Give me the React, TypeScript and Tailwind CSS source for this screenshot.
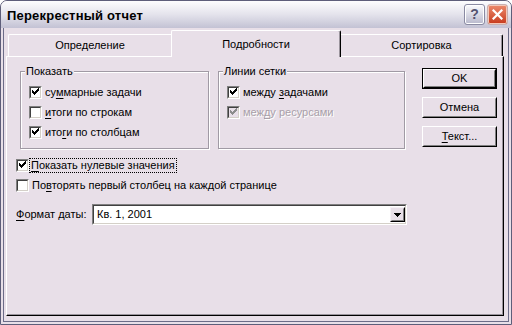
import React from 'react';

const BG = 'bg-[#e8dfe8]';

const Mark: React.FC<{ color: string }> = ({ color }) => (
  <svg width="9" height="9" viewBox="0 0 9 9" shapeRendering="crispEdges">
    {[
      [1, 2],
      [2, 3],
      [3, 4],
      [4, 3],
      [5, 2],
      [6, 1],
      [7, 0],
    ].map(([x, y]) => (
      <rect key={x} x={x} y={y} width="1" height="3" fill={color} />
    ))}
  </svg>
);

const CheckBox: React.FC<{ checked?: boolean; disabled?: boolean }> = ({ checked, disabled }) => (
  <div className="w-[13px] h-[13px] shrink-0 flex border border-t-[#808080] border-l-[#808080] border-r-white border-b-white">
    <div
      className={`flex-1 flex items-center justify-center border border-t-[#404040] border-l-[#404040] border-r-[#d4d0c8] border-b-[#d4d0c8] ${
        disabled ? BG : 'bg-white'
      }`}
    >
      {checked && <Mark color={disabled ? '#8c8c8c' : '#000'} />}
    </div>
  </div>
);

const U: React.FC<{ children: React.ReactNode }> = ({ children }) => (
  <span className="underline underline-offset-[2px]">{children}</span>
);

const Row: React.FC<{ checked?: boolean; disabled?: boolean; children: React.ReactNode }> = ({
  checked,
  disabled,
  children,
}) => (
  <div className="flex items-center h-[20px] gap-[3px] whitespace-nowrap">
    <CheckBox checked={checked} disabled={disabled} />
    <span className={disabled ? 'text-[#a8a0a8] [text-shadow:1px_1px_0_#fff]' : ''}>{children}</span>
  </div>
);

const Button: React.FC<{ isDefault?: boolean; children: React.ReactNode }> = ({ isDefault, children }) => (
  <div className={`w-[75px] h-[21px] flex ${isDefault ? 'border border-black' : ''}`}>
    <div className="flex-1 flex border border-t-white border-l-white border-r-black border-b-black">
      <div className="flex-1 flex items-center justify-center border border-t-transparent border-l-transparent border-r-[#808080] border-b-[#808080]">
        {children}
      </div>
    </div>
  </div>
);

const GroupBox: React.FC<{ title: string; width: string; children: React.ReactNode }> = ({
  title,
  width,
  children,
}) => (
  <fieldset
    className={`${width} m-0 p-0 border border-[#a09aa4] shadow-[inset_1px_1px_0_#fff,1px_1px_0_#fff]`}
  >
    <legend className={`ml-[4px] px-[1px] leading-[14px] ${BG}`}>{title}</legend>
    <div className="pl-[8px] pt-[4px] pb-[6px]">{children}</div>
  </fieldset>
);

export default function App() {
  return (
    <div
      className={`w-[512px] h-[325px] flex flex-col ${BG} border border-[#5e5e7a] rounded-t-[7px] overflow-hidden text-[11px] text-black font-['Liberation_Sans',Arial,sans-serif]`}
    >
      {/* title bar */}
      <div className="h-[27px] shrink-0 flex items-center pl-[6px] pr-[3px] bg-gradient-to-b from-[#fdfdfe] via-[#e4e3ec] to-[#c3c2d4]">
        <span className="flex-1 pt-[2px] text-[13px] font-bold tracking-[0.2px]">Перекрестный отчет</span>
        <div className="flex gap-[2px]">
          <div className="w-[21px] h-[21px] rounded-[3px] border border-[#8a8aa2] bg-gradient-to-b from-[#fbfbfd] to-[#b8b8cc] shadow-[inset_0_0_0_1px_#fff] flex items-center justify-center text-[14px] font-bold text-[#545470]">
            ?
          </div>
          <div className="w-[21px] h-[21px] rounded-[3px] border border-[#c8b0b0] bg-gradient-to-b from-[#ec8a6c] to-[#c6381a] shadow-[inset_0_0_0_1px_#f4c8b8] flex items-center justify-center">
            <svg width="11" height="11" viewBox="0 0 11 11">
              <path d="M1.5 1.5 L9.5 9.5 M9.5 1.5 L1.5 9.5" stroke="#fff" strokeWidth="2.2" strokeLinecap="square" />
            </svg>
          </div>
        </div>
      </div>

      {/* client */}
      <div className="flex-1 flex flex-col mx-[2px] mb-[2px] border border-t-0 border-[#6c6c88]">
        {/* tabs */}
        <div className="flex items-end h-[27px] mt-[2px] ml-[4px] relative z-10 -mb-[1px]">
          <div className="w-[163px] h-[22px] mb-[1px] flex items-center justify-center border-t border-l border-white rounded-tl-[2px]">
            Определение
          </div>
          <div className={`w-[170px] h-[27px] flex items-center justify-center border-t border-l border-r border-t-white border-l-white border-r-black shadow-[inset_-1px_0_0_#9a949c] rounded-t-[2px] ${BG}`}>
            Подробности
          </div>
          <div className="w-[162px] h-[22px] mb-[1px] flex items-center justify-center border-t border-r border-t-white border-r-black shadow-[inset_-1px_0_0_#9a949c] rounded-tr-[2px]">
            Сортировка
          </div>
        </div>

        {/* panel */}
        <div className="flex-1 flex flex-col ml-[2px] mr-[4px] mb-[5px] pl-[9px] pt-[7px] border border-t-white border-l-white border-r-black border-b-black shadow-[inset_-1px_-1px_0_#9a949c]">
          <div className="flex items-start ml-[4px]">
            <GroupBox title="Показать" width="w-[189px]">
              <Row checked>
                су<U>м</U>марные задачи
              </Row>
              <Row>
                <U>и</U>тоги по строкам
              </Row>
              <Row checked>
                ито<U>г</U>и по столбцам
              </Row>
            </GroupBox>
            <div className="ml-[9px]">
              <GroupBox title="Линии сетки" width="w-[187px]">
                <Row checked>
                  между <U>з</U>адачами
                </Row>
                <Row checked disabled>
                  меж<U>д</U>у ресурсами
                </Row>
                <div className="h-[20px]" />
              </GroupBox>
            </div>
            <div className="ml-[17px] mt-[4px] flex flex-col gap-[8px]">
              <Button isDefault>OK</Button>
              <Button>Отмена</Button>
              <Button>
                <span>
                  <U>Т</U>екст...
                </span>
              </Button>
            </div>
          </div>

          <div className="mt-[6px]">
            <div className="flex items-center h-[20px] gap-[1px] whitespace-nowrap">
              <CheckBox checked />
              <span className="outline outline-1 outline-dotted outline-black px-[1px] leading-[13px]">
                <U>П</U>оказать нулевые значения
              </span>
            </div>
            <Row>
              По<U>в</U>торять первый столбец на каждой странице
            </Row>
          </div>

          <div className="flex items-center mt-[9px]">
            <span className="w-[76px] shrink-0 whitespace-nowrap">
              <U>Ф</U>ормат даты:
            </span>
            <div className="w-[315px] h-[21px] flex border border-t-[#808080] border-l-[#808080] border-r-white border-b-white">
              <div className="flex-1 flex items-center border border-t-[#404040] border-l-[#404040] border-r-[#d4d0c8] border-b-[#d4d0c8] bg-white">
                <span className="flex-1 pl-[3px]">Кв. 1, 2001</span>
                <div className={`w-[15px] h-[15px] flex border border-t-[#f4f0f4] border-l-[#f4f0f4] border-r-black border-b-black ${BG}`}>
                  <div className="flex-1 flex items-center justify-center border border-t-transparent border-l-transparent border-r-[#808080] border-b-[#808080]">
                    <svg width="7" height="4" viewBox="0 0 7 4" shapeRendering="crispEdges">
                      <path d="M0 0h7v1h-1v1h-1v1h-1v1h-1v-1h-1v-1h-1v-1h-1z" fill="#000" />
                    </svg>
                  </div>
                </div>
              </div>
            </div>
          </div>
        </div>
      </div>
    </div>
  );
}
